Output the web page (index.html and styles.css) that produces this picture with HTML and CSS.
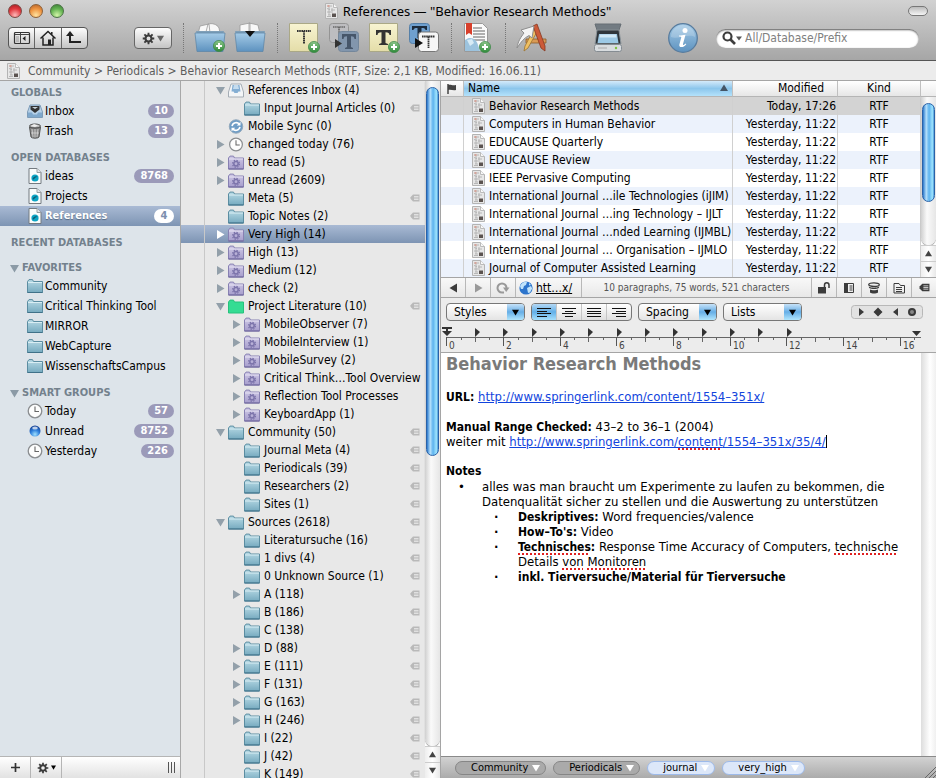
FILE: index.html
```html
<!DOCTYPE html>
<html lang="en">
<head>
<meta charset="utf-8">
<title>References</title>
<link rel="stylesheet" href="styles.css">
</head>
<body>
<svg class="defs" aria-hidden="true">
  <defs>
    <linearGradient id="gFolder" x1="0" y1="0" x2="0" y2="1"><stop offset="0" stop-color="#b9dbe6"/><stop offset="1" stop-color="#76aabf"/></linearGradient>
    <linearGradient id="gPurple" x1="0" y1="0" x2="0" y2="1"><stop offset="0" stop-color="#d0cae6"/><stop offset="1" stop-color="#a69dcc"/></linearGradient>
    <linearGradient id="gBig" x1="0" y1="0" x2="0" y2="1"><stop offset="0" stop-color="#a5cbe7"/><stop offset="1" stop-color="#5d92bf"/></linearGradient>
    <linearGradient id="gNote" x1="0" y1="0" x2="0" y2="1"><stop offset="0" stop-color="#f8f4d2"/><stop offset="1" stop-color="#e4dda8"/></linearGradient>
    <linearGradient id="gPlus" x1="0" y1="0" x2="0" y2="1"><stop offset="0" stop-color="#8cc68a"/><stop offset="1" stop-color="#2f8a3a"/></linearGradient>
    <radialGradient id="gBlue" cx=".5" cy=".8" r=".8"><stop offset="0" stop-color="#9fe0ff"/><stop offset=".5" stop-color="#2f80dc"/><stop offset="1" stop-color="#123b8e"/></radialGradient>
  </defs>
  <symbol id="plus-badge" viewBox="0 0 12 12"><circle cx="6" cy="6" r="5.6" fill="url(#gPlus)" stroke="#3b8746" stroke-width=".7"/><path d="M6 3v6M3 6h6" stroke="#fff" stroke-width="2"/></symbol>
  <symbol id="folder" viewBox="0 0 16 14"><path d="M.5 13.500V2.500L2 .6h3.500l1 1.900h9v11z" fill="url(#gFolder)" stroke="#5b8da1"/><path d="M1 3.500h14" stroke="#d9edf3"/><path d="M.5 13.500h15" stroke="#3f7189"/></symbol>
  <symbol id="folder-green" viewBox="0 0 16 14"><path d="M.5 13.500V2.500L2 .6h3.500l1 1.900h9v11z" fill="#35dc93" stroke="#27c27c"/></symbol>
  <symbol id="folder-smart" viewBox="0 0 16 14"><path d="M.5 13.500V2.500L2 .6h3.500l1 1.900h9v11z" fill="url(#gPurple)" stroke="#8780b2"/><path d="M1 3.500h14" stroke="#e6e2f3"/><path d="M.5 13.500h15" stroke="#6b639a"/><circle cx="8" cy="8.300" r="2.200" fill="none" stroke="#7b73aa" stroke-width="1.500"/><circle cx="8" cy="8.300" r="3.500" fill="none" stroke="#7b73aa" stroke-width="1.200" stroke-dasharray="1.400 1.350"/></symbol>
  <symbol id="inbox" viewBox="0 0 16 14"><path d="M3 1h10l2.500 7v5.500H.5V8z" fill="#b7d1e8" stroke="#7d9cb8"/><path d="M1 8.500h4l1 2h4l1-2h4V13H1z" fill="#7fa8cc"/><path d="M3.500 2h9v3.500L8 9 3.500 5.500z" fill="#333"/><path d="M5 3l3 2 3-2z" fill="#c8d4dc"/></symbol>
  <symbol id="tray" viewBox="0 0 16 14"><path d="M3 .5h10l2.500 8v5H.5v-5z" fill="#f3f5f7" stroke="#a5adb5"/><path d="M4.500 1.500h7l1 6.500h-2l-1 1.500h-3L5.500 8h-2z" fill="#84aed3"/><path d="M6 1.500h4l1 4H5z" fill="#c5dcee"/></symbol>
  <symbol id="trash" viewBox="0 0 16 16"><ellipse cx="8" cy="3" rx="5.500" ry="2" fill="#bbb" stroke="#555"/><path d="M2.500 4l1.500 10c1 1.600 7 1.600 8 0L13.500 4c-2 1.700-9 1.700-11 0z" fill="#8b8b8b" stroke="#555"/><path d="M5 6l1 8M8 6v8.500M11 6l-1 8M4 10h8" stroke="#d5d5d5" stroke-width=".8"/><path d="M4 3l3-2 4 1.500-3 1.500z" fill="#eee"/></symbol>
  <symbol id="dbfile" viewBox="0 0 13 16"><path d="M.5.500h8l4 4v11H.500z" fill="#fafcfc" stroke="#737a80"/><path d="M8.500.500v4h4" fill="#e3e6e8" stroke="#9aa0a4"/><circle cx="6.500" cy="10" r="3.600" fill="#0ba4c4"/><path d="M4 11c1-3 4-3.500 5-2-1.500-.5-2.500 1-4 2.500z" fill="#0a5c74"/></symbol>
  <symbol id="clock" viewBox="0 0 16 16"><circle cx="8" cy="8" r="6.800" fill="#fdfdfd" stroke="#8a8d90" stroke-width="1.300"/><path d="M8 3.500V8.500h4" fill="none" stroke="#666" stroke-width="1.100"/></symbol>
  <symbol id="dot" viewBox="0 0 16 16"><circle cx="8" cy="8" r="5.500" fill="url(#gBlue)"/><ellipse cx="8" cy="5" rx="2.800" ry="1.600" fill="#fff" opacity=".7"/></symbol>
  <symbol id="sync" viewBox="0 0 16 16"><circle cx="8" cy="8" r="7.200" fill="#6d9cc6" stroke="#92a7ba"/><path d="M3.800 7.500C4.500 3.500 9.500 2.800 11.500 5.500M12.200 8.500C11.500 12.500 6.500 13.200 4.500 10.500" fill="none" stroke="#fff" stroke-width="1.700"/><path d="M12.800 2.800v4H8.800zM3.200 13.200v-4h4z" fill="#fff"/></symbol>
  <symbol id="rtf" viewBox="0 0 13 16"><path d="M.5.500h8l4 4v11H.500z" fill="#e7e7e7" stroke="#b4b4b4"/><path d="M2 3h5M2 5.500l3 1M6 7h4M2 9h4M3 12h3M4 4v8M7 5v5M2 13.500h4" stroke="#b0b0b0" stroke-width=".9"/><path d="M8.500.500v4h4" fill="#f8f8f8" stroke="#bbb"/><path d="M7 10.500h4v3.500H7z" fill="#5b5350"/><path d="M2.500 2h2v2h-2z" fill="#d5a49a"/></symbol>
  <symbol id="tag" viewBox="0 0 10 8"><path d="M3 .5h6.500v7H3L.5 4.800V3.200z" fill="currentColor"/><path d="M4 2.500h4.500M4 4h4.500M4 5.500h4.500" stroke="#f0f0f0" stroke-width=".7"/></symbol>
  <symbol id="right" viewBox="0 0 9 9"><path d="M1 0l7.500 4.500L1 9z" fill="currentColor"/></symbol>
  <symbol id="down" viewBox="0 0 9 9"><path d="M0 1h9L4.500 8.500z" fill="currentColor"/></symbol>
  <symbol id="gear" viewBox="0 0 14 14"><circle cx="7" cy="7" r="3.200" fill="none" stroke="#3c3c3c" stroke-width="2.200"/><path d="M7 .8v3M7 10.200v3M.8 7h3M10.200 7h3M2.600 2.600l2 2M9.400 9.400l2 2M11.400 2.600l-2 2M4.600 9.400l-2 2" stroke="#3c3c3c" stroke-width="2"/></symbol>
  <symbol id="globe" viewBox="0 0 14 14"><circle cx="7" cy="7" r="6.600" fill="#2c74cc"/><path d="M1 5c2-4 5-4.500 7-4L7 4 5 5 4 8 2 8zM8 7l4-2 1.200 2.500L11 11.500 9 12zM10 2l2 2-2 .5z" fill="#bfe3fb"/></symbol>
</svg>

<header class="chrome">
  <div class="titlebar">
    <div class="lights"><button class="light red" aria-label="Close"></button><button class="light amber" aria-label="Minimize"></button><button class="light green" aria-label="Zoom"></button></div>
    <h1 class="title"><svg class="i-doc"><use href="#rtf"/></svg>References — "Behavior Research Methods"</h1>
    <button class="pill" aria-label="Toggle toolbar"></button>
  </div>
  <div class="toolbar">
    <div class="seg-nav">
      <button aria-label="Sidebar"><svg width="18" height="14" viewBox="0 0 18 14"><rect x="1.500" y="1.500" width="15" height="11" rx="1" fill="none" stroke="#333" stroke-width="1.200"/><path d="M7.500 2v10.500M2 3.500h14" stroke="#444"/><path d="M12.500 5v5L9.500 7.500z" fill="#222"/><path d="M3 6h3M3 8h3M3 10h3" stroke="#999"/></svg></button>
      <button aria-label="Home"><svg width="18" height="16" viewBox="0 0 18 16"><path d="M1.500 8.500L9 1.500l7.500 7M4 7.500V15h10V7.500M12.800 2v3" fill="none" stroke="#222" stroke-width="1.500"/><path d="M9 9.500h3V15H9z" fill="#222"/></svg></button>
      <button aria-label="Up"><svg width="16" height="14" viewBox="0 0 16 14"><path d="M4 4v7h11" fill="none" stroke="#222" stroke-width="2"/><path d="M4 0l4 5H0z" fill="#222"/></svg></button>
    </div>
    <span class="gap"></span>
    <button class="action" aria-label="Action"><svg width="13" height="13"><use href="#gear"/></svg><svg width="7" height="7" class="dim"><use href="#down"/></svg></button>
    <span class="sep"></span>
    <button class="tool" aria-label="New group"><svg width="32" height="32" viewBox="0 0 32 32"><path d="M4 12L6 4l9-2 1 9zM12 10l2-8c4-1 9 0 11 4l1 5z" fill="#f8f8f8" stroke="#999" stroke-width=".8"/><path d="M2 9h28l-1.500 6h-25z" fill="#7f9fb8"/><path d="M1 11h30l-2 18.500H3z" fill="url(#gBig)" stroke="#6088a8" stroke-width=".8"/><use href="#plus-badge" x="19" y="18" width="12" height="12"/></svg></button>
    <button class="tool" aria-label="Move to group"><svg width="32" height="32" viewBox="0 0 32 32"><path d="M6 12V3l10-2v10zM15 11V1l9 2 2 9z" fill="#f8f8f8" stroke="#999" stroke-width=".8"/><path d="M1 9h30l-1.500 5h-27z" fill="#7f9fb8"/><path d="M1 11h30l-2 18.500H3z" fill="url(#gBig)" stroke="#6088a8" stroke-width=".8"/><path d="M11 9h10l-5 6z" fill="#111"/></svg></button>
    <span class="sep"></span>
    <button class="tool" aria-label="New plain text"><svg width="32" height="32" viewBox="0 0 32 32"><path d="M1.500 1.500h28v28h-28z" fill="url(#gNote)" stroke="#aaa886"/><path d="M9 9h14M16 9v13" fill="none" stroke="#333" stroke-width="2" stroke-dasharray="1.600 .6"/><use href="#plus-badge" x="20" y="19" width="12" height="12"/></svg></button>
    <button class="tool" aria-label="Convert to rich text"><svg width="32" height="32" viewBox="0 0 32 32"><rect x="1.500" y="1.500" width="19" height="19" rx="3" fill="#bdbdc0" stroke="#949494"/><path d="M5 5h12M11 5v10" stroke="#666" stroke-width="1.700" stroke-dasharray="1.500 .6"/><rect x="10.500" y="9.500" width="20" height="20" rx="3" fill="#8296ad" stroke="#74879b"/><path d="M14 12h14v5h-1.500c-.3-2-1-2.700-3.500-2.700V25l2 1v1h-8v-1l2-1V14.300c-2.500 0-3.200.7-3.500 2.700H14z" fill="#46566a"/><path d="M7 17l7 4.500L7 26z" fill="#333"/></svg></button>
    <button class="tool" aria-label="New rich text"><svg width="32" height="32" viewBox="0 0 32 32"><path d="M1.500 1.500h28v28h-28z" fill="url(#gNote)" stroke="#aaa886"/><path d="M8 8h15v5h-1.500c-.3-2-1-2.800-4-2.800V21l2.500 1v1h-9v-1l2.500-1V10.200c-3 0-3.700.8-4 2.800H8z" fill="#333"/><use href="#plus-badge" x="20" y="19" width="12" height="12"/></svg></button>
    <button class="tool" aria-label="Convert to plain text"><svg width="32" height="32" viewBox="0 0 32 32"><rect x="1.500" y="1.500" width="20" height="20" rx="3" fill="#6fa0cf" stroke="#5680a8"/><path d="M4 4h15v4h-1.500c-.3-1.500-1-2-4-2v10h-4V6c-3 0-3.700.5-4 2H4z" fill="#1c2b3c"/><rect x="10.500" y="10" width="20" height="19.500" rx="3" fill="#f6f6f6" stroke="#777"/><path d="M14 14.500h13M20.500 14.500V26" stroke="#333" stroke-width="1.800" stroke-dasharray="1.600 .5"/><path d="M7 16l8 5-8 5z" fill="#111"/></svg></button>
    <span class="sep"></span>
    <button class="tool" aria-label="New bookmark"><svg width="32" height="32" viewBox="0 0 32 32"><path d="M2.500 1.500h18l5 5v23h-23z" fill="#fafafa" stroke="#999"/><path d="M11 6h9M11 9h12M11 12h12M11 15h12M11 18h12" stroke="#666" stroke-width="1.200"/><path d="M4 1h6v12l-3-2-3 2z" fill="#d8402c"/><path d="M3 29V18c6-5 12 0 13 5l2 6z" fill="#9cc3de"/><path d="M5 18l5-1 2 4-4 3z" fill="#d8ebf5"/><use href="#plus-badge" x="17" y="19" width="12" height="12"/></svg></button>
    <span class="sep"></span>
    <button class="tool" aria-label="Scripts"><svg width="32" height="32" viewBox="0 0 32 32"><path d="M10 17h20v4H10z" fill="#d99a55" stroke="#8c5b2a" stroke-width=".8"/><path d="M19 5L9 24l-1 5 4-3L22 8z" fill="#f0c063" stroke="#9b7431" stroke-width=".8"/><path d="M17 4l4-2 8 22v5l-4-3z" fill="#cc5a38" stroke="#863822" stroke-width=".8"/><path d="M1 26C2 19 5 15 8 11L5 8l13-4-2 12-3-2.500C8 16 5 20 1 26z" fill="#f4f4f4" stroke="#8d8d8d"/></svg></button>
    <span class="spacer"></span>
    <button class="tool" aria-label="Scan"><svg width="32" height="32" viewBox="0 0 32 32"><path d="M3 2h26l-2 6H5z" fill="#727b82" stroke="#666e74"/><path d="M5 8h22l2 14H3z" fill="#2f363c" stroke="#8b949a"/><path d="M7 12h18l1.500 9h-21z" fill="#9cc9e6"/><path d="M8 12.500h16l.5 3H7.500z" fill="#d2e9f7"/><rect x="2.500" y="22.500" width="27" height="7" rx="2" fill="#d8dcdf" stroke="#858c92"/><circle cx="24" cy="26" r="1.200" fill="#7cc242"/><path d="M6 26h9" stroke="#aaa"/></svg></button>
    <span class="spacer"></span>
    <button class="tool" aria-label="Info"><svg width="32" height="32" viewBox="0 0 32 32"><circle cx="16" cy="16" r="14.300" fill="url(#gBig)" stroke="#587c9e" stroke-width="1.300"/><path d="M4 15a12 12 0 0 1 24 0c-6-4-18 3-24 0z" fill="#fff" opacity=".2"/><circle cx="18" cy="8.500" r="2.500" fill="#fff"/><path d="M12 13.500c2 0 4-.3 6.500-.8L16 22c-.3 1.500.8 1.300 2.500-.5l.8.700c-2.500 3.500-7.500 4-7 .5l2-7.500c-.7-.7-1.500-.7-2.300-.7z" fill="#fff"/></svg></button>
    <label class="search"><svg width="20" height="14" viewBox="0 0 20 14"><circle cx="5.500" cy="5.500" r="4" fill="none" stroke="#3d3d3d" stroke-width="2.200"/><path d="M8.500 8.500l4.500 4.500" stroke="#3d3d3d" stroke-width="2.600"/><path d="M14 5.500h6l-3 4z" fill="#555"/></svg><input type="search" placeholder="All/Database/Prefix" aria-label="Search"></label>
  </div>
</header>

<nav class="pathbar" aria-label="Path"><svg class="i-doc"><use href="#rtf"/></svg><span>Community &gt; Periodicals &gt; Behavior Research Methods (RTF, Size: 2,1 KB, Modified: 16.06.11)</span></nav>

<main class="panes">
  <aside class="sidebar">
    <div class="groups">
      <section><h2>GLOBALS</h2><ul>
        <li><svg class="ic"><use href="#inbox"/></svg><span>Inbox</span><b class="badge">10</b></li>
        <li><svg class="ic"><use href="#trash"/></svg><span>Trash</span><b class="badge">13</b></li></ul></section>
      <section><h2>OPEN DATABASES</h2><ul>
        <li><svg class="ic"><use href="#dbfile"/></svg><span>ideas</span><b class="badge">8768</b></li>
        <li><svg class="ic"><use href="#dbfile"/></svg><span>Projects</span></li>
        <li class="on"><svg class="ic"><use href="#dbfile"/></svg><span>References</span><b class="badge">4</b></li></ul></section>
      <section><h2>RECENT DATABASES</h2></section>
      <section><h2><svg class="tri"><use href="#down"/></svg>FAVORITES</h2><ul>
        <li><svg class="ic"><use href="#folder"/></svg><span>Community</span></li>
        <li><svg class="ic"><use href="#folder"/></svg><span>Critical Thinking Tool</span></li>
        <li><svg class="ic"><use href="#folder"/></svg><span>MIRROR</span></li>
        <li><svg class="ic"><use href="#folder"/></svg><span>WebCapture</span></li>
        <li><svg class="ic"><use href="#folder"/></svg><span>WissenschaftsCampus</span></li></ul></section>
      <section><h2><svg class="tri"><use href="#down"/></svg>SMART GROUPS</h2><ul>
        <li><svg class="ic"><use href="#clock"/></svg><span>Today</span><b class="badge">57</b></li>
        <li><svg class="ic"><use href="#dot"/></svg><span>Unread</span><b class="badge">8752</b></li>
        <li><svg class="ic"><use href="#clock"/></svg><span>Yesterday</span><b class="badge">226</b></li></ul></section>
    </div>
    <footer class="side-foot">
      <button aria-label="Add"><svg width="9" height="9" viewBox="0 0 9 9"><path d="M4.500 0v9M0 4.500h9" stroke="#333" stroke-width="1.700"/></svg></button>
      <button aria-label="Actions"><svg width="12" height="12"><use href="#gear"/></svg><svg width="5" height="5"><use href="#down"/></svg></button>
      <svg class="grip" width="8" height="11" viewBox="0 0 8 11"><path d="M.5 0v11M3.500 0v11M6.500 0v11" stroke="#555"/></svg>
    </footer>
  </aside>

  <section class="tree">
    <ul>
      <li><button class="tw"><svg><use href="#down"/></svg></button><svg class="ic"><use href="#tray"/></svg><span>References Inbox (4)</span></li>
      <li class="l1"><i class="tw"></i><svg class="ic"><use href="#folder"/></svg><span>Input Journal Articles (0)</span><svg class="tg"><use href="#tag"/></svg></li>
      <li><i class="tw"></i><svg class="ic"><use href="#sync"/></svg><span>Mobile Sync (0)</span></li>
      <li><button class="tw"><svg><use href="#right"/></svg></button><svg class="ic"><use href="#clock"/></svg><span>changed today (76)</span></li>
      <li><button class="tw"><svg><use href="#right"/></svg></button><svg class="ic"><use href="#folder-smart"/></svg><span>to read (5)</span></li>
      <li><button class="tw"><svg><use href="#right"/></svg></button><svg class="ic"><use href="#folder-smart"/></svg><span>unread (2609)</span></li>
      <li><i class="tw"></i><svg class="ic"><use href="#folder"/></svg><span>Meta (5)</span><svg class="tg"><use href="#tag"/></svg></li>
      <li><i class="tw"></i><svg class="ic"><use href="#folder"/></svg><span>Topic Notes (2)</span><svg class="tg"><use href="#tag"/></svg></li>
      <li class="on"><button class="tw"><svg><use href="#right"/></svg></button><svg class="ic"><use href="#folder-smart"/></svg><span>Very High (14)</span></li>
      <li><button class="tw"><svg><use href="#right"/></svg></button><svg class="ic"><use href="#folder-smart"/></svg><span>High (13)</span></li>
      <li><button class="tw"><svg><use href="#right"/></svg></button><svg class="ic"><use href="#folder-smart"/></svg><span>Medium (12)</span></li>
      <li><button class="tw"><svg><use href="#right"/></svg></button><svg class="ic"><use href="#folder-smart"/></svg><span>check (2)</span></li>
      <li><button class="tw"><svg><use href="#down"/></svg></button><svg class="ic"><use href="#folder-green"/></svg><span>Project Literature (10)</span><svg class="tg"><use href="#tag"/></svg></li>
      <li class="l1"><button class="tw"><svg><use href="#right"/></svg></button><svg class="ic"><use href="#folder-smart"/></svg><span>MobileObserver (7)</span></li>
      <li class="l1"><button class="tw"><svg><use href="#right"/></svg></button><svg class="ic"><use href="#folder-smart"/></svg><span>MobileInterview (1)</span></li>
      <li class="l1"><button class="tw"><svg><use href="#right"/></svg></button><svg class="ic"><use href="#folder-smart"/></svg><span>MobileSurvey (2)</span></li>
      <li class="l1"><button class="tw"><svg><use href="#right"/></svg></button><svg class="ic"><use href="#folder-smart"/></svg><span>Critical Think…Tool Overview</span></li>
      <li class="l1"><button class="tw"><svg><use href="#right"/></svg></button><svg class="ic"><use href="#folder-smart"/></svg><span>Reflection Tool Processes</span></li>
      <li class="l1"><button class="tw"><svg><use href="#right"/></svg></button><svg class="ic"><use href="#folder-smart"/></svg><span>KeyboardApp (1)</span></li>
      <li><button class="tw"><svg><use href="#down"/></svg></button><svg class="ic"><use href="#folder"/></svg><span>Community (50)</span><svg class="tg"><use href="#tag"/></svg></li>
      <li class="l1"><i class="tw"></i><svg class="ic"><use href="#folder"/></svg><span>Journal Meta (4)</span><svg class="tg"><use href="#tag"/></svg></li>
      <li class="l1"><i class="tw"></i><svg class="ic"><use href="#folder"/></svg><span>Periodicals (39)</span><svg class="tg"><use href="#tag"/></svg></li>
      <li class="l1"><i class="tw"></i><svg class="ic"><use href="#folder"/></svg><span>Researchers (2)</span><svg class="tg"><use href="#tag"/></svg></li>
      <li class="l1"><i class="tw"></i><svg class="ic"><use href="#folder"/></svg><span>Sites (1)</span><svg class="tg"><use href="#tag"/></svg></li>
      <li><button class="tw"><svg><use href="#down"/></svg></button><svg class="ic"><use href="#folder"/></svg><span>Sources (2618)</span><svg class="tg"><use href="#tag"/></svg></li>
      <li class="l1"><i class="tw"></i><svg class="ic"><use href="#folder"/></svg><span>Literatursuche (16)</span><svg class="tg"><use href="#tag"/></svg></li>
      <li class="l1"><i class="tw"></i><svg class="ic"><use href="#folder"/></svg><span>1 divs (4)</span><svg class="tg"><use href="#tag"/></svg></li>
      <li class="l1"><i class="tw"></i><svg class="ic"><use href="#folder"/></svg><span>0 Unknown Source (1)</span><svg class="tg"><use href="#tag"/></svg></li>
      <li class="l1"><button class="tw"><svg><use href="#right"/></svg></button><svg class="ic"><use href="#folder"/></svg><span>A (118)</span><svg class="tg"><use href="#tag"/></svg></li>
      <li class="l1"><i class="tw"></i><svg class="ic"><use href="#folder"/></svg><span>B (186)</span><svg class="tg"><use href="#tag"/></svg></li>
      <li class="l1"><i class="tw"></i><svg class="ic"><use href="#folder"/></svg><span>C (138)</span><svg class="tg"><use href="#tag"/></svg></li>
      <li class="l1"><button class="tw"><svg><use href="#right"/></svg></button><svg class="ic"><use href="#folder"/></svg><span>D (88)</span><svg class="tg"><use href="#tag"/></svg></li>
      <li class="l1"><button class="tw"><svg><use href="#right"/></svg></button><svg class="ic"><use href="#folder"/></svg><span>E (111)</span><svg class="tg"><use href="#tag"/></svg></li>
      <li class="l1"><button class="tw"><svg><use href="#right"/></svg></button><svg class="ic"><use href="#folder"/></svg><span>F (131)</span><svg class="tg"><use href="#tag"/></svg></li>
      <li class="l1"><button class="tw"><svg><use href="#right"/></svg></button><svg class="ic"><use href="#folder"/></svg><span>G (163)</span><svg class="tg"><use href="#tag"/></svg></li>
      <li class="l1"><button class="tw"><svg><use href="#right"/></svg></button><svg class="ic"><use href="#folder"/></svg><span>H (246)</span><svg class="tg"><use href="#tag"/></svg></li>
      <li class="l1"><i class="tw"></i><svg class="ic"><use href="#folder"/></svg><span>I (22)</span><svg class="tg"><use href="#tag"/></svg></li>
      <li class="l1"><i class="tw"></i><svg class="ic"><use href="#folder"/></svg><span>J (42)</span><svg class="tg"><use href="#tag"/></svg></li>
      <li class="l1"><i class="tw"></i><svg class="ic"><use href="#folder"/></svg><span>K (149)</span><svg class="tg"><use href="#tag"/></svg></li>
    </ul>
    <div class="scroll"><div class="track"><div class="thumb tall"></div></div><button aria-label="Scroll up"><svg class="flip"><use href="#down"/></svg></button><button aria-label="Scroll down"><svg><use href="#down"/></svg></button></div>
  </section>

  <section class="detail">
    <div class="list">
      <table>
        <thead><tr><th class="c-flag"><svg width="10" height="10" viewBox="0 0 10 10"><path d="M1 0v10" stroke="#444" stroke-width="1.500"/><path d="M1 1c3-1 4 1 8 0v5C6 7 4 5 1 6z" fill="#444"/></svg></th><th class="c-name">Name<svg class="flip"><use href="#down"/></svg></th><th class="c-mod">Modified</th><th class="c-kind">Kind</th></tr></thead>
        <tbody>
          <tr class="on"><td></td><td><svg class="i-doc"><use href="#rtf"/></svg>Behavior Research Methods</td><td>Today, 17:26</td><td>RTF</td></tr>
          <tr><td></td><td><svg class="i-doc"><use href="#rtf"/></svg>Computers in Human Behavior</td><td>Yesterday, 11:22</td><td>RTF</td></tr>
          <tr><td></td><td><svg class="i-doc"><use href="#rtf"/></svg>EDUCAUSE Quarterly</td><td>Yesterday, 11:22</td><td>RTF</td></tr>
          <tr><td></td><td><svg class="i-doc"><use href="#rtf"/></svg>EDUCAUSE Review</td><td>Yesterday, 11:22</td><td>RTF</td></tr>
          <tr><td></td><td><svg class="i-doc"><use href="#rtf"/></svg>IEEE Pervasive Computing</td><td>Yesterday, 11:22</td><td>RTF</td></tr>
          <tr><td></td><td><svg class="i-doc"><use href="#rtf"/></svg>International Journal …ile Technologies (iJIM)</td><td>Yesterday, 11:22</td><td>RTF</td></tr>
          <tr><td></td><td><svg class="i-doc"><use href="#rtf"/></svg>International Journal …ing Technology – IJLT</td><td>Yesterday, 11:22</td><td>RTF</td></tr>
          <tr><td></td><td><svg class="i-doc"><use href="#rtf"/></svg>International Journal …nded Learning (IJMBL)</td><td>Yesterday, 11:22</td><td>RTF</td></tr>
          <tr><td></td><td><svg class="i-doc"><use href="#rtf"/></svg>International Journal … Organisation – IJMLO</td><td>Yesterday, 11:22</td><td>RTF</td></tr>
          <tr><td></td><td><svg class="i-doc"><use href="#rtf"/></svg>Journal of Computer Assisted Learning</td><td>Yesterday, 11:22</td><td>RTF</td></tr>
        </tbody>
      </table>
      <div class="scroll"><div class="cap"></div><div class="track"><div class="thumb short"></div></div><button aria-label="Scroll up"><svg class="flip"><use href="#down"/></svg></button><button aria-label="Scroll down"><svg><use href="#down"/></svg></button></div>
    </div>

    <div class="navbar">
      <button aria-label="Back"><svg class="mirror" width="9" height="10"><use href="#right"/></svg></button>
      <button aria-label="Forward" class="off"><svg width="9" height="10"><use href="#right"/></svg></button>
      <button aria-label="Reload" class="off"><svg width="14" height="12" viewBox="0 0 14 12"><path d="M8 10.500H6A4.500 4.500 0 1 1 10.500 6" fill="none" stroke="currentColor" stroke-width="2"/><path d="M7 5.500h6.500L10.200 10z" fill="currentColor"/></svg></button>
      <div class="url"><svg width="14" height="14"><use href="#globe"/></svg><a href="#">htt…x/</a></div>
      <p class="stats">10 paragraphs, 75 words, 521 characters</p>
      <button aria-label="Lock"><svg width="14" height="12" viewBox="0 0 14 12"><path d="M1 5h8v6.500H1z" fill="#3c3c3c"/><path d="M7.500 5V3a2.200 2.200 0 0 1 4.500 0v3" fill="none" stroke="#3c3c3c" stroke-width="1.500"/></svg></button>
      <button aria-label="Contents"><svg width="12" height="12" viewBox="0 0 12 12"><path d="M1 1h4v10H1z" fill="#3c3c3c"/><path d="M5 1.500h5.500v9H5M6.500 4h3M6.500 6h3M6.500 8h3" fill="none" stroke="#3c3c3c"/></svg></button>
      <button aria-label="Keywords"><svg width="12" height="12" viewBox="0 0 12 12"><ellipse cx="6" cy="2.700" rx="5.300" ry="1.800" fill="#eee" stroke="#3c3c3c" stroke-width="1.300"/><path d="M.7 4.500c3 1.600 7.600 1.600 10.600 0L10.800 6c-2.500 1.300-7 1.300-9.600 0zM2 7.500c2 1 6 1 8 0v3c-2 1.300-6 1.300-8 0z" fill="#3c3c3c"/></svg></button>
      <button aria-label="Annotations"><svg width="12" height="12" viewBox="0 0 12 12"><path d="M1 1.500h5l1.500 2h4v7.500H1zM3 5.500h6M3 7.500h6M3 9.500h6" fill="none" stroke="#3c3c3c"/></svg></button>
      <button aria-label="Tags"><svg width="11" height="9"><use href="#tag"/></svg></button>
    </div>

    <div class="format">
      <span class="pop"><select aria-label="Styles"><option>Styles</option></select><svg><use href="#down"/></svg></span>
      <div class="align">
        <button class="on" aria-label="Left"><svg width="14" height="9" viewBox="0 0 14 9"><path d="M0 .5h14M0 3.500h10M0 5.500h14M0 8.500h10" stroke="#111"/></svg></button>
        <button aria-label="Center"><svg width="14" height="9" viewBox="0 0 14 9"><path d="M0 .5h14M3 3.500h8M0 5.500h14M3 8.500h8" stroke="#111"/></svg></button>
        <button aria-label="Justify"><svg width="14" height="9" viewBox="0 0 14 9"><path d="M0 .5h14M0 3.500h14M0 5.500h14M0 8.500h14" stroke="#111"/></svg></button>
        <button aria-label="Right"><svg width="14" height="9" viewBox="0 0 14 9"><path d="M0 .5h14M4 3.500h10M0 5.500h14M4 8.500h10" stroke="#111"/></svg></button>
      </div>
      <span class="pop"><select aria-label="Spacing"><option>Spacing</option></select><svg><use href="#down"/></svg></span>
      <span class="pop"><select aria-label="Lists"><option>Lists</option></select><svg><use href="#down"/></svg></span>
      <svg class="tabs" width="72" height="14" viewBox="0 0 72 14" role="img" aria-label="Tab stops"><rect x=".5" y=".5" width="71" height="13" rx="3" fill="#e2e2e2" stroke="#b8b8b8"/><path d="M8 3l5 4-5 4zM27 2.500L31.500 7 27 11.500 22.500 7zM47 3l-5 4 5 4z" fill="#3a3a3a"/><circle cx="61" cy="7" r="3" fill="#888" stroke="#3a3a3a" stroke-width="2"/></svg>
    </div>
    <svg class="ruler" height="27" role="img" aria-label="Ruler">
      <g fill="none" stroke="#666">
        <path d="M5 11.500h475"/>
        <path stroke="#555" d="M5.500 11v9M62.500 11v9M119.500 11v9M175.500 11v9M232.500 11v9M289.500 11v9M345.500 11v9M402.500 11v9M459.500 11v9"/>
        <path d="M20.500 11v3M34.500 11v5M48.500 11v3M77.500 11v3M91.500 11v5M105.500 11v3M133.500 11v3M147.500 11v5M162.500 11v3M190.500 11v3M204.500 11v5M218.500 11v3M247.500 11v3M261.500 11v5M275.500 11v3M303.500 11v3M317.500 11v5M332.500 11v3M360.500 11v3M374.500 11v5M388.500 11v3M417.500 11v3M431.500 11v5M445.500 11v3M473.500 11v3"/>
      </g>
      <path fill="#333" d="M1 1h10v2H1zM1 5h10L6 10zM5 2h2v4H5zM34 2l5 4-5 5zM62 2l5 4-5 5zM91 2l5 4-5 5zM119 2l5 4-5 5zM147 2l5 4-5 5zM176 2l5 4-5 5zM204 2l5 4-5 5zM232 2l5 4-5 5zM261 2l5 4-5 5zM289 2l5 4-5 5zM317 2l5 4-5 5zM346 2l5 4-5 5zM471 5h9l-4.500 5z"/>
      <g class="nums"><text x="8" y="23">0</text><text x="65" y="23">2</text><text x="122" y="23">4</text><text x="178" y="23">6</text><text x="235" y="23">8</text><text x="292" y="23">10</text><text x="348" y="23">12</text><text x="405" y="23">14</text><text x="462" y="23">16</text></g>
    </svg>

    <div class="editor">
      <article>
        <h2>Behavior Research Methods</h2>
        <p><b>URL:</b> <a href="#">http://www.springerlink.com/content/1554–351x/</a></p>
        <p><b>Manual Range Checked:</b> 43–2 to 36–1 (2004)<br>weiter mit <a href="#">http://www.springerlink.com/<span class="sp">content</span>/1554–351x/35/4/</a><span class="caret"></span></p>
        <h3>Notes</h3>
        <ul>
          <li>alles was man braucht um Experimente zu laufen zu bekommen, die Datenqualität sicher zu stellen und die Auswertung zu unterstützen
            <ul>
              <li><b>Deskriptives:</b> Word frequencies/valence</li>
              <li><b>How–To's:</b> Video</li>
              <li><b><span class="sp">Technisches</span>:</b> Response Time Accuracy of Computers, <span class="sp">technische</span> Details <span class="sp">von</span> <span class="sp">Monitoren</span></li>
              <li><b>inkl. Tierversuche/Material für Tierversuche</b></li>
            </ul>
          </li>
        </ul>
      </article>
      <div class="scroll blank"></div>
    </div>
    <footer class="tags">
      <button class="gray">Community<svg><use href="#down"/></svg></button>
      <button class="gray">Periodicals<svg><use href="#down"/></svg></button>
      <button>journal<svg><use href="#down"/></svg></button>
      <button>very_high<svg><use href="#down"/></svg></button>
      <svg class="resize" width="12" height="12" viewBox="0 0 12 12"><path d="M1 12L12 1M5 12l7-7M9 12l3-3" stroke="#666"/></svg>
    </footer>
  </section>
</main>
</body>
</html>
```
FILE: styles.css
```css
* { box-sizing: border-box; }
body {
  margin: 0;
  height: 100vh;
  display: flex;
  flex-direction: column;
  overflow: hidden;
  font: 12px/18px "DejaVu Sans Condensed", "Noto Sans", sans-serif;
  color: #000;
  background: #ececec;
}
button, select, input { font: inherit; color: inherit; margin: 0; padding: 0; border: 0; background: none; }
button { display: flex; align-items: center; justify-content: center; }
ul { list-style: none; margin: 0; padding: 0; }
h1, h2, h3, p { margin: 0; }
svg { flex: none; display: block; }
.defs { position: absolute; width: 0; height: 0; }
.i-doc { width: 13px; height: 16px; }
.flip { transform: rotate(180deg); }
.mirror { transform: scaleX(-1); }
.spacer { flex: 1; }

/* window chrome */
.chrome { flex: none; height: 61px; background: linear-gradient(#d2d2d2, #a6a6a6); border-bottom: 1px solid #555; }
.titlebar { height: 22px; display: grid; grid-template-columns: 1fr auto 1fr; align-items: center; padding: 0 8px; }
.lights { display: flex; gap: 7px; }
.light { width: 14px; height: 14px; border-radius: 50%; border: 1px solid #7d4a45; }
.red { background: radial-gradient(circle at 50% 85%, #ffb9b9, #e23a40 55%, #a01a20); }
.amber { background: radial-gradient(circle at 50% 85%, #ffe3a0, #ee9440 55%, #b0602a); border-color: #8d6138; }
.green { background: radial-gradient(circle at 50% 85%, #d2f5a8, #64b352 55%, #3a7a36); border-color: #4b7245; }
.title { display: flex; align-items: center; gap: 5px; font-family: "Noto Sans", sans-serif; font-size: 13px; font-weight: 400; }
.pill { justify-self: end; width: 20px; height: 10px; border: 1px solid #777; border-radius: 5px; background: linear-gradient(#bbb, #f5f5f5); }
.toolbar { display: flex; align-items: center; gap: 8px; height: 32px; padding: 0 17px 0 8px; }
.toolbar .gap { width: 30px; }
.seg-nav { display: flex; width: 80px; height: 22px; border: 1px solid #555; border-radius: 4px; background: linear-gradient(#fdfdfd, #c4c4c4); }
.seg-nav button { flex: 1; }
.seg-nav button + button { border-left: 1px solid #666; }
.action { width: 38px; height: 22px; gap: 2px; border: 1px solid #666; border-radius: 4px; background: linear-gradient(#fdfdfd, #c4c4c4); }
.dim { color: #666; }
.sep { height: 30px; margin: 0 2px 0 3px; border-left: 1px dotted #777; }
.tool { width: 32px; height: 32px; }
.search { display: flex; align-items: center; gap: 3px; width: 203px; height: 19px; margin-left: 9px; padding: 0 6px; border-radius: 10px; background: #fff; box-shadow: inset 0 1px 2px #555; }
.search input { flex: 1; min-width: 0; outline: 0; }
.search input::placeholder { color: #808080; opacity: 1; }

.pathbar { flex: none; display: flex; align-items: center; gap: 8px; height: 20px; padding: 0 7px; color: #5c5c5c; background: #ececec; border-bottom: 1px solid #a5a5a5; white-space: nowrap; }

.panes { flex: 1; min-height: 0; display: flex; }

/* source list */
.sidebar { flex: none; width: 181px; display: flex; flex-direction: column; background: #dde4ea; border-right: 1px solid #a8a8a8; }
.groups { flex: 1; min-height: 0; overflow: hidden; display: flex; flex-direction: column; gap: 9px; padding-top: 4px; }
.groups h2 { display: flex; align-items: center; gap: 3px; height: 16px; padding-left: 11px; font-size: 11px; line-height: 16px; font-weight: 700; color: #73818d; }
.groups h2 .tri { margin-left: -1px; }
.tri { width: 9px; height: 9px; color: #8b9aa6; }
.groups li { display: flex; align-items: center; gap: 2px; height: 20px; padding: 0 6px 0 27px; }
.groups li span { flex: 1; }
.groups li .ic { width: 16px; height: 16px; }
.groups .on, .tree .on { background: linear-gradient(#a9bad4, #7d94b3); }
.groups .on { color: #fff; font-weight: 700; text-shadow: 0 1px 1px #566a85; font-size: 11px; }
.badge { min-width: 20px; padding: 0 6px; border-radius: 7px; background: #9b9ab9; color: #fff; font-size: 11px; line-height: 14px; text-align: center; text-shadow: none; }
.on .badge { background: #fff; color: #7c8fae; }
.side-foot { flex: none; display: flex; align-items: center; height: 22px; background: linear-gradient(#fff, #e2e2e2); border-top: 1px solid #b5b5b5; padding-right: 4px; }
.side-foot button { width: 31px; height: 21px; gap: 2px; border-right: 1px solid #b5b5b5; }
.grip { margin-left: auto; }

/* group tree */
.tree { flex: none; width: 260px; display: flex; background: #e8e8e8; border-right: 1px solid #a5a5a5; overflow: hidden; }
.tree ul { flex: 1; min-width: 0; }
.tree li { display: flex; align-items: center; height: 18px; padding-right: 5px; white-space: nowrap; }
.tree li::before { content: ""; flex: none; width: 23px; height: 18px; margin-right: 10px; border-right: 1px solid #c8c8c8; }
.tree .l1::before { margin-right: 26px; }
.tree .tw { flex: none; width: 10px; height: 10px; margin-right: 3px; color: #93a0aa; }
.tree .tw svg { width: 9px; height: 9px; }
.tree .on .tw { color: #fff; }
.tree .ic { width: 16px; height: 15px; margin-right: 4px; }
.tg { width: 10px; height: 8px; margin-left: auto; color: #b9b9b9; }

/* scroll bars */
.scroll { flex: none; width: 15px; display: flex; flex-direction: column; background: #fff; }
.track { flex: 1; min-height: 0; padding-top: 6px; border-radius: 0 0 8px 8px; background: linear-gradient(90deg, #d0d0d0, #fafafa 40%, #e6e6e6); box-shadow: 0 1px 1px #999; }
.thumb { width: 13px; margin: 0 1px; border: 1px solid #2a62a8; border-radius: 7px; background: linear-gradient(90deg, #2a78cc, #b4e0fc 30%, #5cb2ee 55%, #9fe4fe 85%, #4a9ad8); }
.tall { height: 56%; }
.short { height: 70%; }
.scroll button { height: 16px; border-top: 1px solid #ccc; color: #444; background: linear-gradient(90deg, #eee, #fff 50%, #e8e8e8); }
.scroll button svg { width: 7px; height: 7px; }
.cap { height: 16px; background: linear-gradient(#fff, #ececec); border-bottom: 1px solid #b5b5b5; }
.blank { background: linear-gradient(90deg, #ddd, #fff 60%, #f0f0f0); }

/* document list */
.detail { flex: 1; min-width: 0; display: flex; flex-direction: column; }
.list { flex: none; display: flex; border-bottom: 1px solid #a5a5a5; }
table { flex: 1; min-width: 0; border-collapse: separate; border-spacing: 0; table-layout: fixed; }
th { height: 16px; padding: 0; line-height: 15px; font-weight: 400; background: linear-gradient(#fff, #e6e6e6); border-right: 1px solid #c0c0c0; border-bottom: 1px solid #b5b5b5; }
.c-flag { width: 23px; }
.c-flag svg { margin: auto; }
.c-name { padding: 0 4px; text-align: left; background: linear-gradient(#d4eafa, #8cc6ec 50%, #b4e2fb); }
.c-name svg { float: right; width: 8px; height: 8px; margin-top: 3px; color: #456; }
.c-mod { width: 105px; padding-right: 13px; text-align: right; }
.c-kind { width: 83px; }
td { height: 18px; padding: 0; line-height: 18px; border-right: 1px solid #d0d0d0; white-space: nowrap; background: #fff; overflow: hidden; }
tr:nth-child(even) td { background: #ecf2fc; }
tr.on td { background: #d3d3d3; }
td:nth-child(2) { padding-left: 8px; }
td .i-doc { float: left; margin: 1px 4px 0 0; }
td:nth-child(3) { padding-right: 1px; text-align: right; }
td:nth-child(4) { text-align: center; }

/* navigation strip */
.navbar { flex: none; display: flex; align-items: stretch; height: 20px; background: linear-gradient(#f8f8f8, #e8e8e8); border-bottom: 1px solid #a5a5a5; }
.navbar button { width: 25px; border-right: 1px solid #b8b8b8; color: #3c3c3c; }
.navbar .off { color: #999; }
.navbar .stats ~ button { border-right: 0; border-left: 1px solid #b8b8b8; }
.url { display: flex; align-items: center; gap: 3px; width: 66px; padding-left: 3px; border-right: 1px solid #b8b8b8; }
.url a { color: #000; }
.stats { flex: 1; text-align: center; font-size: 10px; line-height: 19px; color: #555; white-space: nowrap; }

/* formatting strip */
.format { flex: none; display: flex; align-items: center; gap: 6px; height: 28px; padding: 0 13px 0 5px; }
.pop { position: relative; width: 79px; height: 18px; border: 1px solid #777; border-radius: 4px; background: linear-gradient(#fff, #e4e4e4); overflow: hidden; }
.pop select { display: block; appearance: none; width: 100%; height: 16px; padding: 0 7px; line-height: 16px; outline: 0; }
.pop::after { content: ""; position: absolute; right: 0; top: 0; width: 17px; height: 16px; background: linear-gradient(#c6e2f8, #66aee6 50%, #b2e6fd); pointer-events: none; }
.pop svg { position: absolute; z-index: 1; right: 5px; top: 5px; width: 7px; height: 7px; pointer-events: none; }
.align { display: flex; width: 101px; height: 18px; border: 1px solid #777; border-radius: 4px; background: linear-gradient(#fff, #dedede); overflow: hidden; }
.align button { flex: 1; }
.align button + button { border-left: 1px solid #c4c4c4; }
.align .on { background: linear-gradient(#b4d8f4, #62b0e8 50%, #a6e0fc); }
.tabs { margin-left: auto; }
.ruler { width: 100%; border-bottom: 1px solid #a5a5a5; }
.nums { font-size: 10px; fill: #444; }

/* text */
.editor { flex: 1; min-height: 0; display: flex; background: #fff; }
article { flex: 1; min-width: 0; padding: 0 12px 0 5px; font-size: 13px; line-height: 15px; overflow: hidden; }
article h2 { margin-bottom: 14px; font-size: 18px; line-height: 22px; color: #7a7a7a; }
article p { margin-bottom: 15px; }
article b, article h3 { font-size: 12px; font-weight: 700; }
article b { line-height: 1; }
article a { color: #1144dd; }
article li { position: relative; padding-left: 36px; }
article li::before { content: "•"; position: absolute; left: 12px; }
article li li::before { content: "·"; font-weight: 700; }
.sp { text-decoration: underline dotted #e02020 2px; text-underline-offset: 2px; }
.caret { display: inline-block; width: 1px; height: 13px; margin-bottom: -2px; background: #000; vertical-align: baseline; }

.tags { flex: none; display: flex; align-items: center; gap: 7px; height: 22px; padding-left: 14px; border-top: 1px solid #8a8a8a; background: linear-gradient(#d2d2d2, #ababab); }
.tags button { height: 14px; gap: 4px; padding: 0 5px 0 15px; font-size: 11px; line-height: 12px; border: 1px solid #9dbaea; border-radius: 7px; background: #dce7f9; }
.tags .gray { border-color: #868686; background: #aaa; }
.tags button svg { width: 8px; height: 8px; color: #fff; }
.tags .resize { margin: auto 0 0 auto; }
```
